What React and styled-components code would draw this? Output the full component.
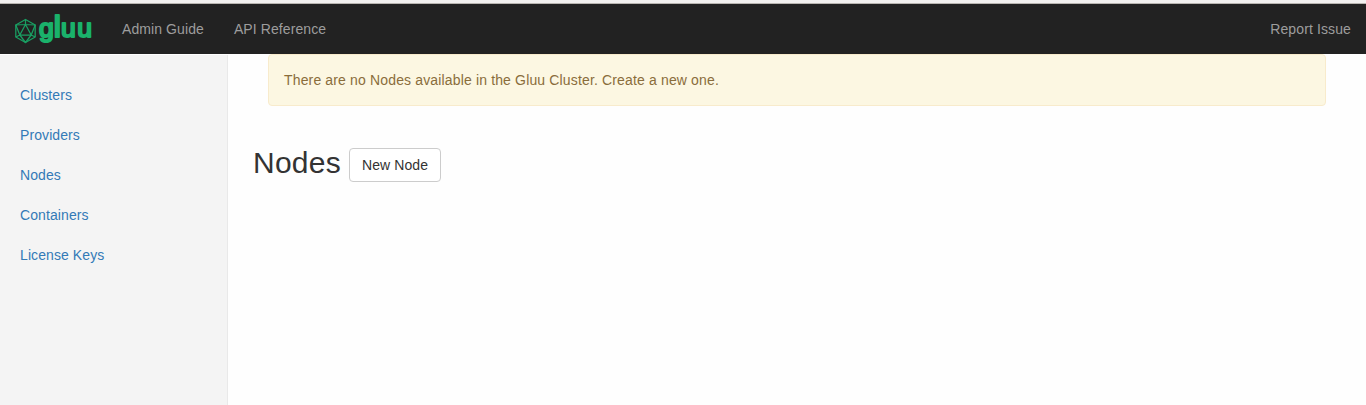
import React from "react";
import styled, { createGlobalStyle } from "styled-components";

const GlobalStyle = createGlobalStyle`
  *, *::before, *::after { box-sizing: border-box; }
  body {
    margin: 0;
    background: #fefefe;
    color: #333;
    font: 14px/20px "Liberation Sans", Arial, sans-serif;
    letter-spacing: 0.09px;
  }
  a { text-decoration: none; }
`;

const Page = styled.div`
  display: flex;
  flex-direction: column;
  height: 100vh;
  overflow: hidden;
`;

const TopStrip = styled.div`
  flex: none;
  height: 4px;
  background: #f2f1f0;
  border-bottom: 1px solid #b9b6b1;
`;

const Navbar = styled.nav`
  flex: none;
  display: flex;
  align-items: center;
  height: 50px;
  padding: 0 15px;
  background: #222;
`;

const Brand = styled.a`
  display: block;
  width: 78px;
  height: 34px;
  margin-right: 29px;
`;

const LogoSvg = styled.svg`
  display: block;
  overflow: visible;
`;

const NavLinks = styled.div`
  display: flex;
  gap: 30px;
  flex: 1;
`;

const NavLink = styled.a`
  color: #9d9d9d;
  white-space: nowrap;
`;

const ReportLink = styled(NavLink)`
  letter-spacing: 0.12px;
`;

const Body = styled.div`
  flex: 1;
  display: flex;
  min-height: 0;
`;

const Sidebar = styled.aside`
  flex: none;
  display: flex;
  flex-direction: column;
  width: 228px;
  margin-top: 1px;
  padding-top: 20px;
  background: #f4f4f4;
  border-right: 1px solid #e9e9e9;
`;

const SidebarLink = styled.a`
  padding: 10px 20px;
  color: #337ab7;
`;

const Main = styled.main`
  flex: 1;
  padding: 0 40px 0 25px;
`;

const Alert = styled.div`
  margin-left: 15px;
  padding: 15px;
  height: 52px;
  color: #8a6d3b;
  background: #fcf7e2;
  border: 1px solid #f8ebcc;
  border-radius: 4px;
  letter-spacing: 0.15px;
`;

const Heading = styled.header`
  display: flex;
  align-items: flex-start;
  gap: 8px;
  margin-top: 40px;
`;

const Title = styled.h1`
  margin: 0;
  font-size: 30px;
  line-height: 33px;
  font-weight: 400;
  letter-spacing: 0.25px;
`;

const Button = styled.button`
  height: 34px;
  margin-top: 2px;
  padding: 0 12px;
  font: inherit;
  letter-spacing: 0.1px;
  color: #333;
  background: #fff;
  border: 1px solid #ccc;
  border-radius: 4px;
`;

const Wordmark = styled.text`
  font: 400 25px "Liberation Sans", sans-serif;
  letter-spacing: 0;
  fill: #1ab26b;
  stroke: #1ab26b;
  stroke-width: 2px;
  stroke-linejoin: round;
`;

const TallLetter = styled.tspan`
  font-size: 30px;
  stroke-width: 2.2px;
`;

const Logo = () => (
  <LogoSvg width="78" height="34" viewBox="0 0 78 34" role="img" aria-label="gluu">
    <g fill="none" stroke="#1a9f63" strokeWidth="1.25" strokeLinejoin="round">
      <path d="M10.5 7.5 20.2 13v12L10.5 30.5.8 25V13z" />
      <path d="M10.5 12.5 16.2 23H4.8z" />
      <path d="M10.5 7.5v5L.8 13l4 10-4 2M10.5 12.5l9.7.5-4 10 4 2M4.8 23l5.7 7.5 5.7-7.5" />
    </g>
    <Wordmark y="25" transform="translate(24 0) scale(1.06 1)">
      <tspan x="0">g</tspan>
      <TallLetter x="13.8">l</TallLetter>
      <tspan x="20.8 36.2">uu</tspan>
    </Wordmark>
  </LogoSvg>
);

const sections = ["Clusters", "Providers", "Nodes", "Containers", "License Keys"];

export default function App() {
  return (
    <Page>
      <GlobalStyle />
      <TopStrip />
      <Navbar>
        <Brand href="#"><Logo /></Brand>
        <NavLinks>
          <NavLink href="#">Admin Guide</NavLink>
          <NavLink href="#">API Reference</NavLink>
        </NavLinks>
        <ReportLink href="#">Report Issue</ReportLink>
      </Navbar>
      <Body>
        <Sidebar>
          {sections.map((name) => (
            <SidebarLink key={name} href="#">{name}</SidebarLink>
          ))}
        </Sidebar>
        <Main>
          <Alert>There are no Nodes available in the Gluu Cluster. Create a new one.</Alert>
          <Heading>
            <Title>Nodes</Title>
            <Button>New Node</Button>
          </Heading>
        </Main>
      </Body>
    </Page>
  );
}
